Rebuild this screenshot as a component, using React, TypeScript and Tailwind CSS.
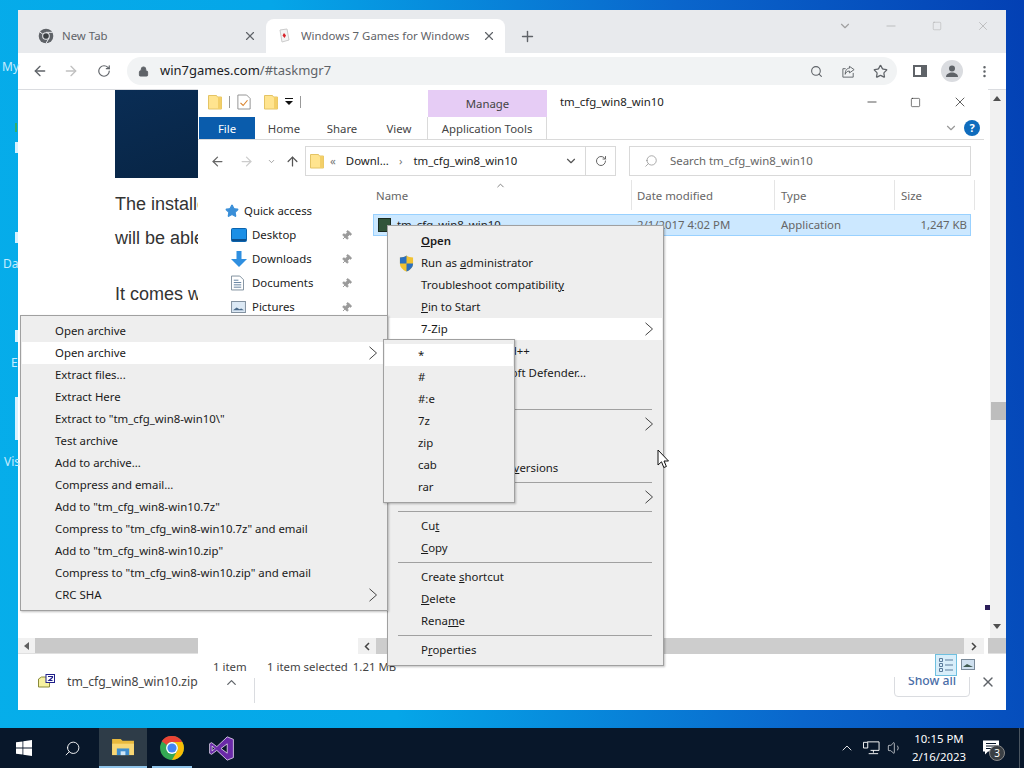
import type { ReactNode } from "react";
import {
  ArrowLeft,
  ArrowRight,
  ArrowUp,
  ChevronDown,
  ChevronUp,
  EllipsisVertical,
  Lock,
  Minus,
  Pin,
  Plus,
  RotateCw,
  Search,
  Square,
  Star,
  Volume1,
  X,
} from "lucide-react";

function Folder({ className = "w-[14px] h-[16px]" }: { className?: string }) {
  return (
    <svg viewBox="0 0 14 16" className={className}>
      <path d="M.5 1.5h8l1 1.5h4v12H.5z" fill="#ffe48f" stroke="#e4c465" />
      <path d="M10 3h3.5v12H10z" fill="#f3cf68" />
    </svg>
  );
}

function ChromeLogo({ className = "w-[26px] h-[26px]" }: { className?: string }) {
  return (
    <svg viewBox="0 0 48 48" className={className}>
      <circle cx="24" cy="24" r="22" fill="#34a853" />
      <path d="M24 2a22 22 0 0 1 19.05 11H24a11 11 0 0 0-9.5 5.5L5 11.6A22 22 0 0 1 24 2z" fill="#ea4335" />
      <path d="M43.05 13A22 22 0 0 1 24 46l9.5-16.5A11 11 0 0 0 24 13z" fill="#fbbc05" />
      <circle cx="24" cy="24" r="11" fill="#fff" />
      <circle cx="24" cy="24" r="8.5" fill="#4285f4" />
    </svg>
  );
}

function GrayChrome() {
  return (
    <svg viewBox="0 0 48 48" className="w-[16px] h-[16px]">
      <circle cx="24" cy="24" r="22" fill="#5f6368" />
      <path d="M24 13h20M14.5 18.5 5 11.6M33.5 29.5 24 46" stroke="#e8eaed" strokeWidth="3" />
      <circle cx="24" cy="24" r="11.5" fill="#e8eaed" />
      <circle cx="24" cy="24" r="8.5" fill="#3c4043" />
    </svg>
  );
}

function Chevron() {
  return (
    <svg viewBox="0 0 10 14" className="w-[10px] h-[14px]">
      <path d="M1.5.8 8.5 7l-7 6.2" fill="none" stroke="#444" strokeWidth="1" />
    </svg>
  );
}

function MenuRow({
  children,
  active,
  arrow,
  icon,
  left = "pl-[33px]",
}: {
  children?: ReactNode;
  active?: boolean;
  arrow?: boolean;
  icon?: ReactNode;
  left?: string;
}) {
  return (
    <div
      className={`relative h-[22px] pb-px flex items-center text-[11.4px] text-[#1a1a1a] whitespace-pre ${left} ${
        active ? "bg-white" : ""
      }`}
    >
      {icon}
      <span>{children}</span>
      {arrow && (
        <span className="absolute right-[8px] top-[4px]">
          <Chevron />
        </span>
      )}
    </div>
  );
}

function Sep() {
  return <div className="h-px my-[3px] ml-[9px] mr-[10px] bg-[#a0a0a0]" />;
}

function Shield() {
  return (
    <svg viewBox="0 0 16 18" className="absolute left-[10px] top-[3px] w-[15px] h-[17px]">
      <path d="M8 .5c2 1.500 4 2 7 2.200V9c0 4-3 7-7 8.500C4 16 1 13 1 9V2.700C4 2.500 6 2 8 .5z" fill="#f1c232" />
      <path d="M8 .5V9H1V2.700C4 2.500 6 2 8 .5z" fill="#2a6fc0" />
      <path d="M8 9h7c0 4-3 7-7 8.500z" fill="#2a6fc0" />
    </svg>
  );
}

const sevenZipItems = [
  "Open archive",
  "Open archive",
  "Extract files...",
  "Extract Here",
  'Extract to "tm_cfg_win8-win10\\"',
  "Test archive",
  "Add to archive...",
  "Compress and email...",
  'Add to "tm_cfg_win8-win10.7z"',
  'Compress to "tm_cfg_win8-win10.7z" and email',
  'Add to "tm_cfg_win8-win10.zip"',
  'Compress to "tm_cfg_win8-win10.zip" and email',
  "CRC SHA",
];

const formats = ["*", "#", "#:e", "7z", "zip", "cab", "rar"];

function Menus() {
  return (
    <>
      <div className="absolute left-[387px] top-[225px] w-[277px] h-[441px] bg-[#eeeeee] border border-[#a0a0a0] pt-[4px] px-px shadow-[1px_1px_2px_rgba(0,0,0,0.25)]">
        <MenuRow left="pl-[32px]"><b className="font-semibold"><u>O</u>pen</b></MenuRow>
        <MenuRow left="pl-[32px]" icon={<Shield />}>Run as <u>a</u>dministrator</MenuRow>
        <MenuRow left="pl-[32px]">Troubleshoot compatibilit<u>y</u></MenuRow>
        <MenuRow left="pl-[32px]"><u>P</u>in to Start</MenuRow>
        <MenuRow left="pl-[32px]" active arrow>7-Zip</MenuRow>
        <MenuRow left="pl-[32px]">Edit with Notepad++</MenuRow>
        <MenuRow left="pl-[32px]">Scan with Microsoft Defender...</MenuRow>
        <MenuRow left="pl-[32px]">Share</MenuRow>
        <Sep />
        <MenuRow left="pl-[32px]" arrow>Give access to</MenuRow>
        <MenuRow />
        <MenuRow left="pl-[32px]">Restore previous <u>v</u>ersions</MenuRow>
        <Sep />
        <MenuRow left="pl-[32px]" arrow>Send to</MenuRow>
        <Sep />
        <MenuRow left="pl-[32px]">Cu<u>t</u></MenuRow>
        <MenuRow left="pl-[32px]"><u>C</u>opy</MenuRow>
        <Sep />
        <MenuRow left="pl-[32px]">Create <u>s</u>hortcut</MenuRow>
        <MenuRow left="pl-[32px]"><u>D</u>elete</MenuRow>
        <MenuRow left="pl-[32px]">Rena<u>m</u>e</MenuRow>
        <Sep />
        <MenuRow left="pl-[32px]">P<u>r</u>operties</MenuRow>
      </div>

      <div className="absolute left-[20px] top-[315px] w-[368px] h-[296px] bg-[#eeeeee] border border-[#a0a0a0] pt-[4px] px-px shadow-[1px_1px_2px_rgba(0,0,0,0.25)]">
        {sevenZipItems.map((item, i) => (
          <MenuRow key={i} active={i === 1} arrow={i === 1 || i === 12}>
            {item}
          </MenuRow>
        ))}
      </div>

      <div className="absolute left-[383px] top-[339px] w-[132px] h-[164px] bg-[#eeeeee] border border-[#a0a0a0] pt-[4px] px-px shadow-[1px_1px_2px_rgba(0,0,0,0.25)]">
        {formats.map((item, i) => (
          <MenuRow key={item} active={i === 0}>
            {item}
          </MenuRow>
        ))}
      </div>

      <svg viewBox="0 0 13 20" className="absolute left-[657px] top-[449px] w-[13px] h-[20px]">
        <path d="M1 1v15l3.500-3.200 2.300 5.700 2.600-1-2.400-5.500H11.500z" fill="#fff" stroke="#111" strokeWidth="1" />
      </svg>
    </>
  );
}

function NavRow({ icon, label }: { icon: ReactNode; label: string }) {
  return (
    <div className="h-[24px] flex items-center text-[11.4px] text-[#222]">
      <span className="w-[54px] pl-[33px] flex items-center">{icon}</span>
      <span className="w-[89px]">{label}</span>
      <Pin size={11} className="text-[#9a9a9a] rotate-45" fill="#9a9a9a" />
    </div>
  );
}

function ExplorerNav() {
  return (
    <div className="w-[176px] pt-[19px] bg-white overflow-hidden">
      <div className="h-[24px] flex items-center text-[11.4px] text-[#222] pl-[27px] gap-[5px]">
        <Star size={14} className="text-[#3a8fd8]" fill="#3a8fd8" />
        Quick access
      </div>
      <NavRow
        label="Desktop"
        icon={
          <svg viewBox="0 0 16 14" className="w-[16px] h-[14px]">
            <rect x="0.500" y="0.500" width="15" height="13" rx="1" fill="#1b8fe6" stroke="#0b63ad" />
            <path d="M1 11h14v2H1z" fill="#0b4f8e" />
          </svg>
        }
      />
      <NavRow
        label="Downloads"
        icon={
          <svg viewBox="0 0 16 16" className="w-[16px] h-[16px]">
            <path d="M5.500 0h5v8H16l-8 8-8-8h5.500z" fill="#2f8fe0" />
          </svg>
        }
      />
      <NavRow
        label="Documents"
        icon={
          <svg viewBox="0 0 14 16" className="w-[13px] h-[16px]">
            <path d="M.5.5h9l4 4v11H.5z" fill="#fff" stroke="#7a8a99" />
            <path d="M3 5h5M3 7.500h8M3 10h8M3 12.500h8" stroke="#5a7a9a" />
          </svg>
        }
      />
      <NavRow
        label="Pictures"
        icon={
          <svg viewBox="0 0 16 13" className="w-[15px] h-[12px]">
            <rect x="0.500" y="0.500" width="15" height="12" fill="#dce9f5" stroke="#7a8a99" />
            <path d="M2 10l4-3 3 2 2-1 3 2z" fill="#4a6a8a" />
          </svg>
        }
      />
    </div>
  );
}

function ExplorerList() {
  return (
    <div className="relative flex-1 text-[11.4px] text-[#666]">
      <ChevronUp size={11} className="absolute left-[121px] top-0 text-[#777]" />
      <div className="h-[30px] flex items-center">
        <div className="w-[257px] pl-[2px] pt-px">Name</div>
        <div className="w-[143px] pl-[5px] pt-px h-full flex items-center border-l border-[#e5e5e5]">Date modified</div>
        <div className="w-[120px] pl-[6px] pt-px h-full flex items-center border-l border-[#e5e5e5]">Type</div>
        <div className="w-[81px] pl-[6px] pt-px h-full flex items-center border-x border-[#e5e5e5]">Size</div>
      </div>
      <div className="mt-[4px] -ml-px w-[598px] h-[22px] flex items-center bg-[#cce8ff] border border-[#99d1ff]">
        <div className="w-[257px] pl-[4px] flex items-center gap-[6px] text-[#222]">
          <span className="w-[13px] h-[14px] bg-[#31553a] border border-[#1a2a20]" />
          tm_cfg_win8_win10
        </div>
        <div className="w-[144px] pl-[6px]">2/1/2017 4:02 PM</div>
        <div className="w-[118px] pl-[6px]">Application</div>
        <div className="flex-1 text-right pr-[3px]">1,247 KB</div>
      </div>
    </div>
  );
}

function Explorer() {
  return (
    <div className="absolute left-[180px] top-0 w-[790px] h-[588px] pr-[4px] bg-white flex flex-col text-[#222]">
      {/* title bar */}
      <div className="h-[28px] flex items-start shrink-0">
        <div className="w-[230px] h-[26px] flex items-center pl-[10px]">
          <Folder />
          <span className="w-px h-[12px] bg-[#999] ml-[7px]" />
          <svg viewBox="0 0 16 18" className="w-[14px] h-[16px] ml-[7px]">
            <path d="M1 1h10l4 4v12H1z" fill="#fff" stroke="#888" />
            <path d="M4 10l3 3 5-6" fill="none" stroke="#d9822b" strokeWidth="1.300" />
          </svg>
          <span className="ml-[13px]"><Folder /></span>
          <svg viewBox="0 0 8 8" className="w-[8px] h-[8px] ml-[7px]">
            <path d="M0 0h8v1H0zM0 3h8L4 7z" fill="#111" />
          </svg>
          <span className="w-px h-[12px] bg-[#999] ml-[7px]" />
        </div>
        <div className="w-[119px] h-[27px] mt-px bg-[#e6ccf5] flex items-center justify-center text-[11.4px] text-[#444]">
          Manage
        </div>
        <div className="pl-[13px] h-[26px] flex items-center text-[11.4px]">tm_cfg_win8_win10</div>
        <div className="ml-auto flex items-center h-[26px] pr-[16px] gap-[31px] text-[#111]">
          <Minus size={14} strokeWidth={1.200} />
          <Square size={11} strokeWidth={1.200} />
          <X size={16} strokeWidth={1} />
        </div>
      </div>
      {/* ribbon */}
      <div className="h-[23px] flex items-center border-b border-[#dadada] shrink-0 text-[11.4px] text-[#444]">
        <div className="ml-px w-[56px] h-full pt-[2px] bg-[#0a5cac] text-white flex items-center justify-center">File</div>
        <div className="w-[58px] pt-[2px] text-center">Home</div>
        <div className="w-[58px] pt-[2px] text-center">Share</div>
        <div className="w-[56px] pt-[2px] text-center">View</div>
        <div className="w-[120px] h-full pt-[2px] flex items-center justify-center border-x border-[#dadada]">Application Tools</div>
        <ChevronDown size={14} className="ml-auto text-[#999]" />
        <span className="ml-[6px] mr-[4px] w-[16px] h-[16px] rounded-full bg-[#0f6cbd] text-white font-bold text-[11px] flex items-center justify-center">?</span>
      </div>
      {/* address row */}
      <div className="h-[40px] flex items-center shrink-0 text-[11.4px] pt-[2px]">
        <ArrowLeft size={15} className="ml-[12px] text-[#666]" />
        <ArrowRight size={15} className="ml-[14px] text-[#ccc]" />
        <ChevronDown size={9} className="ml-[13px] text-[#888]" />
        <ArrowUp size={15} className="ml-[9px] text-[#555]" />
        <div className="ml-[5px] w-[311px] h-[30px] flex items-center border border-[#d9d9d9] pl-[4px]">
          <Folder />
          <span className="ml-[6px] text-[#777]">«</span>
          <span className="ml-[10px]">Downl...</span>
          <span className="ml-[10px] text-[#777]">›</span>
          <span className="ml-[11px]">tm_cfg_win8_win10</span>
          <ChevronDown size={14} className="ml-auto mr-[7px] text-[#555]" />
          <span className="w-[30px] h-full border-l border-[#d9d9d9] flex items-center justify-center">
            <RotateCw size={12} className="text-[#666]" />
          </span>
        </div>
        <div className="ml-[13px] w-[342px] h-[30px] flex items-center border border-[#d9d9d9] pl-[14px] text-[#666]">
          <Search size={14} strokeWidth={1.200} className="-scale-x-100 text-[#888]" />
          <span className="ml-[12px]">Search tm_cfg_win8_win10</span>
        </div>
      </div>
      {/* panes */}
      <div className="flex-1 flex min-h-0">
        <ExplorerNav />
        <ExplorerList />
      </div>
      {/* scrollbar */}
      <div className="h-[16px] flex shrink-0 items-stretch">
        <div className="w-[160px]" />
        <div className="w-[18px] bg-[#f0f0f0] flex items-center justify-center">
          <svg viewBox="0 0 6 9" className="w-[6px] h-[9px]"><path d="M5 1 1.500 4.500 5 8" fill="none" stroke="#444" strokeWidth="1.500" /></svg>
        </div>
        <div className="flex-1 bg-[#cdcdcd]" />
        <div className="w-[20px] bg-[#f0f0f0] flex items-center justify-center">
          <svg viewBox="0 0 6 9" className="w-[6px] h-[9px]"><path d="M1 1l3.500 3.500L1 8" fill="none" stroke="#444" strokeWidth="1.500" /></svg>
        </div>
      </div>
      {/* status bar */}
      <div className="h-[23px] flex items-start shrink-0 text-[11.4px] text-[#444] pl-[15px] pt-[4px]">
        <span className="w-[54px]">1 item</span>
        <span>1 item selected</span>
        <span className="ml-[5px]">1.21 MB</span>
        <div className="ml-auto -mt-[4px] flex items-start">
          <span className="w-[22px] h-[22px] bg-[#d8eefa] border border-[#6fc0e0] flex items-center justify-center">
            <svg viewBox="0 0 16 16" className="w-[16px] h-[16px]" fill="none" stroke="#5a7a9a">
              <path d="M1.500 1.500h3v3h-3zM1.500 6.500h3v3h-3zM1.500 11.500h3v3h-3zM7 3h8M7 8h8M7 13h8" />
            </svg>
          </span>
          <svg viewBox="0 0 14 11" className="ml-[4px] mt-[5px] mr-[9px] w-[14px] h-[11px]">
            <rect x="0.500" y="0.500" width="13" height="10" fill="#cfe0ef" stroke="#7a8a99" />
            <path d="M2 8l4-3 6 3z" fill="#3f5a50" />
          </svg>
        </div>
      </div>
    </div>
  );
}

function TabBar() {
  return (
    <div className="h-[43px] bg-[#e8eaed] flex items-end shrink-0 text-[11.4px] text-[#5f6368]">
      <div className="w-[248px] h-[34px] flex items-center pl-[20px] pr-[9px]">
        <GrayChrome />
        <span className="ml-[8px]">New Tab</span>
        <X size={14} className="ml-auto text-[#5f6368]" />
      </div>
      <div className="w-[239px] h-[34px] bg-white rounded-t-lg flex items-center pl-[11px] pr-[9px]">
        <svg viewBox="0 0 16 16" className="w-[16px] h-[16px]">
          <path d="M3 2l7-1 2 11-7 2z" fill="#f4f4f4" stroke="#ccc" />
          <path d="M7 5l2 2.500L7.500 10 5.500 7.500z" fill="#d8232a" />
        </svg>
        <span className="ml-[8px] whitespace-nowrap overflow-hidden w-[170px]">Windows 7 Games for Windows</span>
        <X size={14} className="ml-auto text-[#5f6368]" />
      </div>
      <div className="w-[44px] h-[34px] flex items-center justify-center">
        <Plus size={17} className="text-[#5f6368]" />
      </div>
      <div className="ml-auto h-[31px] self-start flex items-center text-[#a0a0a0]">
        <span className="w-[46px] flex justify-center"><ChevronDown size={14} /></span>
        <span className="w-[46px] flex justify-center"><Minus size={14} strokeWidth={1} /></span>
        <span className="w-[46px] flex justify-center"><Square size={10} strokeWidth={1} /></span>
        <span className="w-[46px] flex justify-center"><X size={14} strokeWidth={1} /></span>
      </div>
    </div>
  );
}

function Toolbar() {
  return (
    <div className="h-[36px] bg-white flex items-center shrink-0 text-[#5f6368]">
      <ArrowLeft size={16} className="ml-[14px]" />
      <ArrowRight size={16} className="ml-[15px] text-[#c0c0c0]" />
      <RotateCw size={14} className="ml-[18px]" />
      <div className="ml-[16px] w-[770px] h-[28px] rounded-full bg-[#f1f3f4] flex items-center pl-[11px] text-[13px]">
        <Lock size={11} fill="#5f6368" />
        <span className="ml-[11px] text-[#202124]">win7games.com</span>
        <span>/#taskmgr7</span>
        <Search size={13} className="ml-auto" />
        <svg viewBox="0 0 16 16" className="ml-[18px] w-[15px] h-[15px]" fill="none" stroke="#5f6368">
          <path d="M13 9.500V14H2V5h3M9 2.500l5 3.500-5 3.500V7.500C6.500 7.500 5 9 4.500 11 4.500 7 6 4.500 9 4.500z" />
        </svg>
        <Star size={15} className="ml-[17px] mr-[9px]" />
      </div>
      <span className="ml-[16px] w-[14px] h-[12px] border-2 border-[#5f6368] border-r-[6px]" />
      <span className="ml-[14px] w-[22px] h-[22px] rounded-full bg-[#dadce0] flex items-center justify-center">
        <svg viewBox="0 0 14 14" className="w-[14px] h-[14px]">
          <circle cx="7" cy="4.500" r="3" fill="#5f6368" />
          <path d="M1 13c0-3 3-4.500 6-4.500s6 1.500 6 4.500z" fill="#5f6368" />
        </svg>
      </span>
      <EllipsisVertical size={15} className="ml-[14px]" />
    </div>
  );
}

function PageArea() {
  return (
    <div className="relative flex-1 flex flex-col min-h-0">
      <div className="h-[549px] flex border-t border-[#dadce0] shrink-0">
        <div className="flex-1 overflow-hidden font-['Liberation_Sans',sans-serif] text-[18px] text-[#333] pl-[97px]">
          <div className="w-[200px] h-[88px] bg-[linear-gradient(160deg,#0a2d55,#07223f)]" />
          <div className="mt-[9px] leading-[34px] whitespace-nowrap">The installer</div>
          <div className="leading-[34px] whitespace-nowrap">will be able to</div>
          <div className="mt-[22px] leading-[34px] whitespace-nowrap">It comes with</div>
        </div>
        <div className="relative w-[16px] bg-[#f1f1f1]">
          <span className="absolute left-[3px] top-[6px] w-0 h-0 border-x-[4px] border-x-transparent border-b-[5px] border-b-[#505050]" />
          <span className="absolute left-px right-0 top-[312px] h-[18px] bg-[#bdbdbd]" />
          <span className="absolute left-[3px] top-[534px] w-0 h-0 border-x-[4px] border-x-transparent border-t-[5px] border-t-[#505050]" />
        </div>
      </div>
      <div className="h-[15px] flex shrink-0">
        <div className="w-[17px] bg-[#f1f1f1] flex items-center justify-center">
          <span className="w-0 h-0 border-y-[4px] border-y-transparent border-r-[5px] border-r-[#606060]" />
        </div>
        <div className="flex-1 bg-[#c9c9c9]" />
      </div>
      <div className="flex-1 flex items-center border-t border-[#e0e0e0] text-[12.2px] text-[#444]">
        <svg viewBox="0 0 17 16" className="ml-[20px] w-[17px] h-[16px]">
          <path d="M.5 5l3-2h8v10H.5z" fill="#f6f1a0" stroke="#8a8a3a" />
          <rect x="8" y="0.500" width="8.500" height="8" fill="#fff" stroke="#1f1f8a" />
          <path d="M10 2.500h4.500v1L11 6.500h3.500" fill="none" stroke="#1f1f8a" strokeWidth="1.200" />
        </svg>
        <span className="ml-[12px] mt-px">tm_cfg_win8_win10.zip</span>
        <ChevronUp size={15} className="ml-[26px] text-[#5f6368]" />
        <span className="ml-[15px] mt-[16px] w-px h-[25px] bg-[#dadce0]" />
        <div className="ml-auto mr-[10px] flex items-center">
          <span className="w-[76px] h-[32px] mt-[-2px] rounded border border-[#dadce0] flex items-center justify-center font-medium text-[#4a6ea8]">
            Show all
          </span>
          <X size={16} className="ml-[10px] text-[#5f6368]" />
        </div>
      </div>
      <Explorer />
      <span className="absolute left-[967px] top-[516px] w-[5px] h-[5px] bg-[#2c1f5a]" />
    </div>
  );
}

function Tray() {
  return (
    <div className="ml-auto flex items-center h-full text-white">
      <span className="w-[24px] flex justify-center"><ChevronUp size={16} strokeWidth={1.300} /></span>
      <span className="w-[24px] flex justify-center">
        <svg viewBox="0 0 18 14" className="w-[17px] h-[14px]" fill="none" stroke="#fff">
          <path d="M4.500.5H17v9H8M.5 1H5v6H.5zM11 9.500v2.500M6 13h10" />
        </svg>
      </span>
      <span className="w-[24px] flex justify-center"><Volume1 size={16} strokeWidth={1} /></span>
      <div className="w-[64px] text-[11.4px] leading-[18px] text-center">
        <div>10:15 PM</div>
        <div>2/16/2023</div>
      </div>
      <div className="relative w-[40px] h-full flex items-center justify-center">
        <svg viewBox="0 0 16 14" className="w-[16px] h-[15px] -mt-[1px]">
          <path d="M0 0h16v11H5l-3 3v-3H0z" fill="#fff" />
          <path d="M3 3h10M3 5.500h10M3 8h7" stroke="#08172a" />
        </svg>
        <span className="absolute left-[18px] top-[17px] w-[16px] h-[16px] rounded-full bg-[#3a3f44] border border-[#888] flex items-center justify-center text-[10px]">3</span>
      </div>
      <span className="ml-[8px] mr-[4px] w-px h-full bg-[#4a5560]" />
    </div>
  );
}

function Taskbar() {
  return (
    <div className="h-[40px] bg-[#08172a] flex items-center shrink-0 text-white">
      <span className="w-[48px] flex justify-center">
        <svg viewBox="0 0 16 16" className="w-[16px] h-[16px]" fill="#fff">
          <path d="M0 2.300 6.500 1.400v6.200H0zM7.300 1.300 16 0v7.600H7.300zM0 8.400h6.500v6.200L0 13.700zM7.300 8.400H16V16l-8.700-1.200z" />
        </svg>
      </span>
      <span className="w-[48px] flex justify-center">
        <Search size={17} strokeWidth={1.300} className="-scale-x-100" />
      </span>
      <div className="ml-[3px] w-[48px] h-full bg-[#2e3c48] border-b-2 border-[#8fc4ea] flex items-center justify-center">
        <svg viewBox="0 0 24 20" className="w-[23px] h-[19px]">
          <path d="M0 1h9l2 2h12v15H0z" fill="#e8b93e" />
          <path d="M0 6h23v12H0z" fill="#f8d775" />
          <path d="M5 11h13v7H5z" fill="#3f8ed0" />
          <path d="M9 14h5v4H9z" fill="#cfe6f7" />
        </svg>
      </div>
      <div className="ml-px w-[48px] h-full flex items-center justify-center relative">
        <ChromeLogo />
        <span className="absolute left-[4px] right-[4px] bottom-0 h-[2px] bg-[#8fc4ea]" />
      </div>
      <div className="ml-px w-[48px] h-full flex items-center justify-center">
        <svg viewBox="0 0 24 24" className="w-[25px] h-[25px]">
          <path fillRule="evenodd" d="M17.500.8 7.500 10.200 2.500 6.400.6 7.400v9.200l1.900 1 5-3.800 10 9.400 5.900-2.400V3.200zM17.500 7.500v9L11.500 12zM3 9.500 5.500 12 3 14.500z" fill="#6a2aa8" stroke="#e6daf2" strokeWidth="0.800" />
        </svg>
      </div>
      <Tray />
    </div>
  );
}

export default function App() {
  return (
    <div className="relative w-[1024px] h-[768px] overflow-hidden flex flex-col font-['Noto_Sans',sans-serif] bg-[linear-gradient(80deg,#06aeea_0%,#05a6e8_35%,#0a66cc_70%,#0340b4_100%)]">
      {/* desktop icons peeking out left of the browser */}
      <span className="absolute left-[2px] top-[58px] text-[12px] text-[#c6ecff]">My</span>
      <span className="absolute left-[15px] top-[123px] w-[2px] h-[9px] bg-[#2fae6a]" />
      <span className="absolute left-[15px] top-[142px] w-[3px] h-[11px] bg-[#d8f2ff]" />
      <span className="absolute left-[15px] top-[232px] w-[3px] h-[11px] bg-[#d8f2ff]" />
      <span className="absolute left-[3px] top-[255px] text-[12px] text-[#c6ecff]">Da</span>
      <span className="absolute left-[15px] top-[330px] w-[3px] h-[12px] bg-[#d8f2ff]" />
      <span className="absolute left-[11px] top-[354px] text-[12px] text-[#c6ecff]">E</span>
      <span className="absolute left-[15px] top-[397px] w-[3px] h-[43px] bg-[#d8f2ff]" />
      <span className="absolute left-[4px] top-[453px] text-[12px] text-[#c6ecff]">Vis</span>

      <div className="flex-1 pt-[10px] pl-[18px] min-h-0">
        <div className="w-[988px] h-[700px] bg-white flex flex-col">
          <TabBar />
          <Toolbar />
          <PageArea />
        </div>
      </div>
      <Taskbar />
      <Menus />
    </div>
  );
}
